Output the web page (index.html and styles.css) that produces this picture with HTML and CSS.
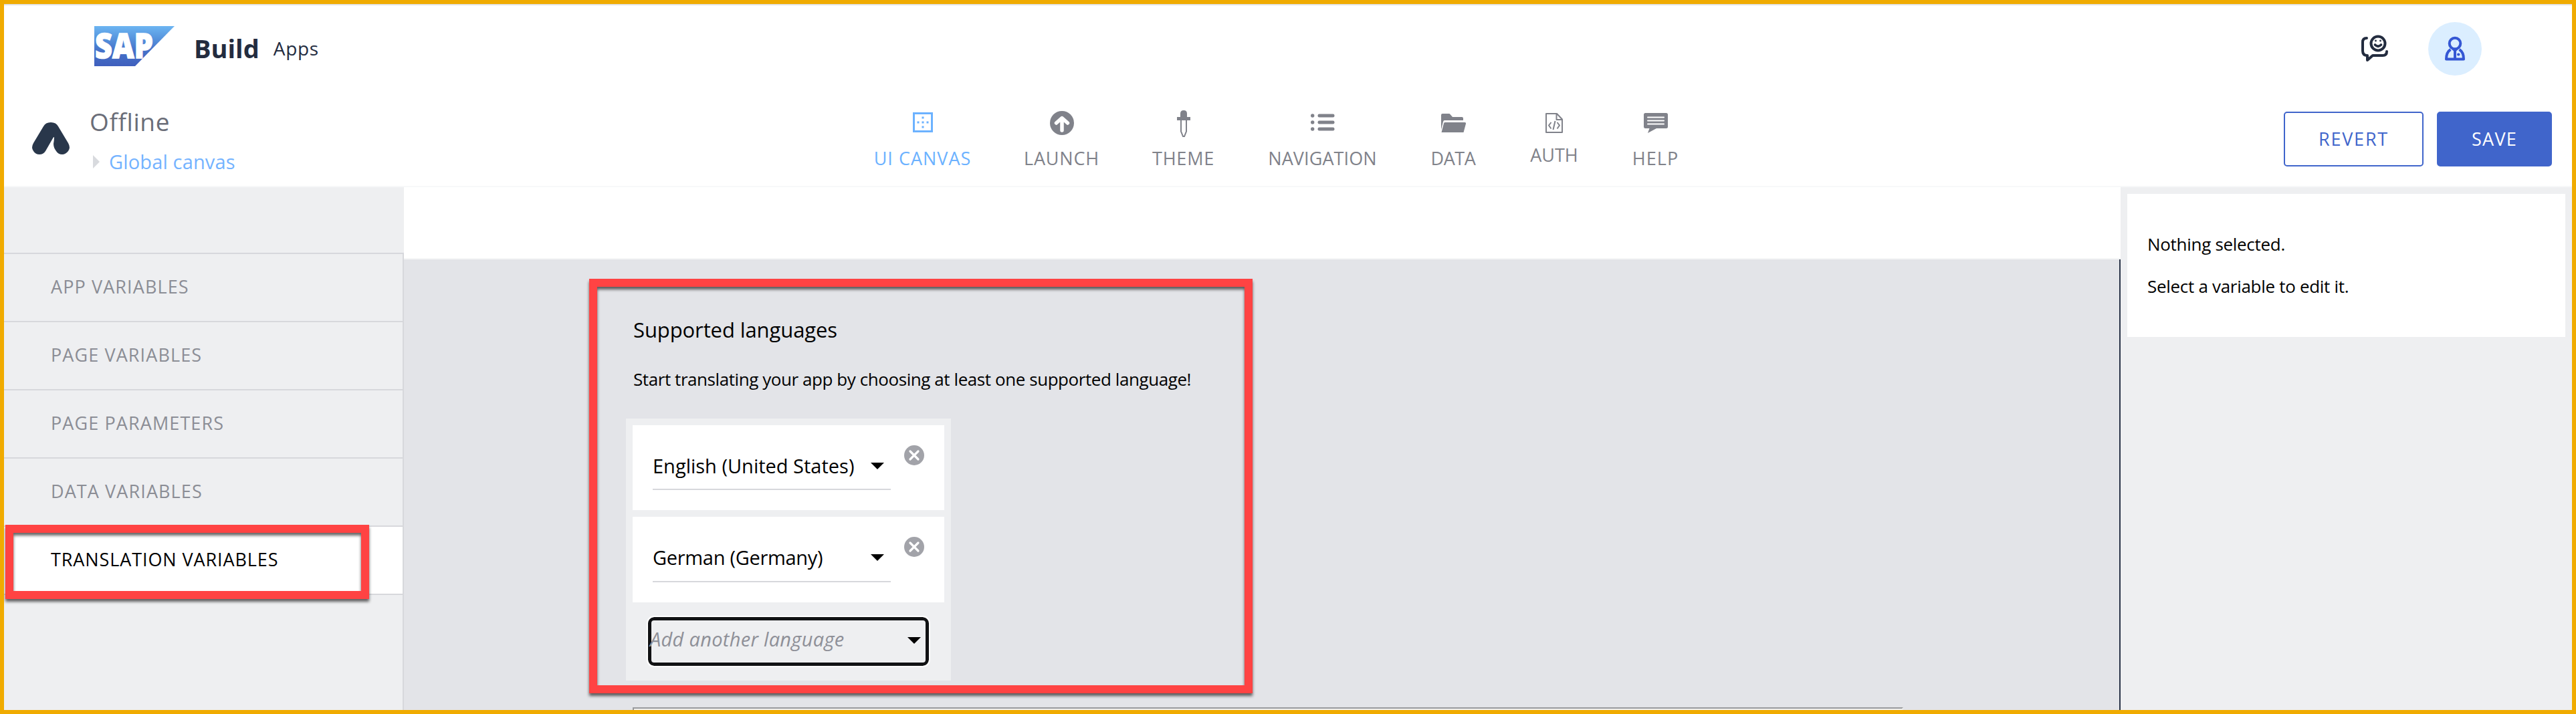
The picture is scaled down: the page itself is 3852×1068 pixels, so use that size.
FILE: index.html
```html
<!DOCTYPE html>
<html lang="en">
<head>
<meta charset="utf-8">
<title>SAP Build Apps</title>
<link rel="stylesheet" href="styles.css">
</head>
<body>
<div class="app">
  <header class="header">
    <div class="shell-bar">
      <svg class="sap-logo" width="120" height="60" viewBox="0 0 120 60">
        <defs><linearGradient id="sap" x1="0" y1="0" x2="0" y2="1"><stop offset="0" stop-color="#6cb5f2"/><stop offset=".3" stop-color="#5795de"/><stop offset=".6" stop-color="#4673ca"/><stop offset="1" stop-color="#3f5fbd"/></linearGradient></defs>
        <path d="M0 0H120L61 60H0Z" fill="url(#sap)"/>
        <text class="sap-text" x="1" y="48" textLength="87" lengthAdjust="spacingAndGlyphs">SAP</text>
      </svg>
      <span class="product">Build</span>
      <span class="product-sub">Apps</span>
      <div class="shell-actions">
        <svg class="feedback" width="42" height="42" viewBox="0 0 42 42" fill="none" stroke="#232c3f" stroke-width="4" stroke-linecap="round" stroke-linejoin="round">
          <path d="M9 5Q3 5 3 11V24Q3 31 10 31V38L18 31H33Q39 31 39 25"/>
          <circle cx="26" cy="13" r="10.5"/>
          <path d="M21.500 15Q26 19.500 30.500 15" stroke-width="3.6"/>
          <circle cx="22.5" cy="9" r=".6" stroke-width="1.6"/><circle cx="29.5" cy="9" r=".6" stroke-width="1.6"/>
        </svg>
        <div class="avatar">
          <svg width="32" height="38" viewBox="0 0 32 38" fill="none" stroke="#3557d4" stroke-width="4" stroke-linejoin="round">
            <circle cx="16" cy="11" r="8.3"/>
            <path d="M9.500 20Q3 24 3 34.500H29Q29 24 22.500 20M16 20V34"/>
            <path d="M10 18.500H22L16 24.500Z" fill="#3557d4" stroke="none"/>
            <path d="M21 27.500H21.500" stroke-linecap="round"/>
          </svg>
        </div>
      </div>
    </div>
    <div class="tool-bar">
      <svg class="app-logo" width="56" height="48" viewBox="0 0 56 48">
        <path d="M17 6Q20 0 28 0T39 6L54 31Q58 38 54 43Q50 48 45 48Q39 48 36 43Q32 38 32 32Q33 26 33 23Q33 21 31.500 23L20 43Q17 48 11 48Q5 48 2 43Q-2 38 2 31Z" fill="#29374b"/>
      </svg>
      <div class="titles">
        <div class="title">Offline</div>
        <div class="crumb"><i class="crumb-arrow"></i>Global canvas</div>
      </div>
      <nav class="nav">
        <a class="nav-item active">
          <svg width="30" height="30" viewBox="0 0 30 30"><path d="M1.500 1.500H28.500V28.500H1.500Z" fill="none" stroke="currentColor" stroke-width="3"/><path d="M6.500 13.500h3v3h-3zM13.500 13.500h3v3h-3zM20.500 13.500h3v3h-3zM13.500 6.500h3v3h-3zM13.500 20.500h3v3h-3z" fill="currentColor"/></svg>
          <span class="ls-canvas">UI CANVAS</span></a>
        <a class="nav-item">
          <svg width="36" height="36" viewBox="0 0 36 36"><circle cx="18" cy="18" r="18" fill="currentColor"/><path d="M18 29V12M9.500 18L18 10.500L26.500 18" fill="none" stroke="#fff" stroke-width="5.500" stroke-linecap="round" stroke-linejoin="round"/></svg>
          <span class="ls-launch">LAUNCH</span></a>
        <a class="nav-item">
          <svg width="20" height="40" viewBox="0 0 20 40"><path d="M5 10V5Q5 0 10 0T15 5V10H20V15H0V10Z" fill="currentColor"/><path d="M6 15V31.500L9 39H11L14 31.500V15" fill="none" stroke="currentColor" stroke-width="2"/></svg>
          <span class="ls-launch">THEME</span></a>
        <a class="nav-item">
          <svg width="36" height="26" viewBox="0 0 36 26" fill="currentColor"><circle cx="2.700" cy="3" r="2.700"/><circle cx="2.700" cy="13" r="2.700"/><circle cx="2.700" cy="23" r="2.700"/><rect x="10.500" y=".5" width="25" height="5" rx="2.200"/><rect x="10.500" y="10.500" width="25" height="5" rx="2.200"/><rect x="10.500" y="20.500" width="25" height="5" rx="2.200"/></svg>
          <span class="ls-navigation">NAVIGATION</span></a>
        <a class="nav-item">
          <svg class="low" width="37" height="28" viewBox="0 0 37 28" fill="currentColor"><path d="M0 2Q0 0 2 0H12Q13 0 13.500 1L17 5H31Q33 5 33 7V10H5Q3.500 10 3 12L0 24Z"/><path d="M5.500 13H35Q37.500 13 37 15L33.500 28H.5L4 14.500Q4.300 13 5.500 13Z"/></svg>
          <span class="ls-data">DATA</span></a>
        <a class="nav-item auth">
          <svg width="26" height="30" viewBox="0 0 26 30" fill="none" stroke="currentColor" stroke-width="2" stroke-linejoin="round"><path d="M1 1H17L25 9.500V29H1ZM16.500 1V10H25"/><path d="M8.500 14L5 18.500L8.500 23.500M17.500 14L21 18.500L17.500 23.500M14.500 12L11.500 25"/></svg>
          <span>AUTH</span></a>
        <a class="nav-item">
          <svg class="low" width="36" height="30" viewBox="0 0 36 30"><path d="M2.500 0H33.500Q36 0 36 2.500V20.500Q36 23 33.500 23H19L6 30L8.500 23H2.500Q0 23 0 20.500V2.500Q0 0 2.500 0Z" fill="currentColor"/><path d="M6 6.500H30M6 11.500H30M6 16.500H30" stroke="#fff" stroke-width="2" stroke-linecap="round"/></svg>
          <span class="ls-help">HELP</span></a>
      </nav>
      <div class="buttons">
        <button class="btn btn-outline">REVERT</button>
        <button class="btn btn-fill">SAVE</button>
      </div>
    </div>
  </header>
  <div class="body">
    <aside class="sidebar">
      <ul class="menu">
        <li>APP VARIABLES</li>
        <li>PAGE VARIABLES</li>
        <li>PAGE PARAMETERS</li>
        <li>DATA VARIABLES</li>
        <li class="selected">TRANSLATION VARIABLES</li>
      </ul>
    </aside>
    <main class="main">
      <div class="main-top"></div>
      <div class="canvas">
        <h2 class="heading">Supported languages</h2>
        <p class="intro">Start translating your app by choosing at least one supported language!</p>
        <div class="languages">
          <div class="card">
            <div class="select">English (United States)<i class="caret"></i></div>
            <svg class="remove" width="30" height="30" viewBox="0 0 30 30"><circle cx="15" cy="15" r="15" fill="#a2a3a9"/><path d="M9 9L21 21M21 9L9 21" stroke="#fff" stroke-width="3.200" stroke-linecap="round"/></svg>
          </div>
          <div class="card">
            <div class="select select-tight">German (Germany)<i class="caret"></i></div>
            <svg class="remove" width="30" height="30" viewBox="0 0 30 30"><circle cx="15" cy="15" r="15" fill="#a2a3a9"/><path d="M9 9L21 21M21 9L9 21" stroke="#fff" stroke-width="3.200" stroke-linecap="round"/></svg>
          </div>
          <div class="add"><span class="add-label">Add another language</span><i class="caret"></i></div>
        </div>
        <div class="table"></div>
      </div>
    </main>
    <aside class="panel">
      <div class="panel-card">
        <p>Nothing selected.</p>
        <p class="second">Select a variable to edit it.</p>
      </div>
    </aside>
  </div>
  <div class="marker marker-menu"></div>
  <div class="marker marker-languages"></div>
</div>
</body>
</html>
```
FILE: styles.css
```css
* { box-sizing: border-box; }
body, p, h2, ul { margin: 0; padding: 0; }
body { font-family: "Open Sans", "Noto Sans", sans-serif; color: #000; white-space: nowrap; }

.app { position: relative; width: 3852px; height: 1068px; border: 6px solid #f0ab00; display: flex; flex-direction: column; overflow: hidden; }

.header { height: 274px; flex: none; background: #fff; border-top: 2px solid #e2e2e2; border-bottom: 2px solid #f7f8f9; }
.shell-bar { height: 130px; display: flex; align-items: flex-start; padding: 31px 135px 0; }
.sap-logo { flex: none; overflow: visible; }
.sap-text { font-size: 51px; font-weight: 800; fill: #fff; stroke: #fff; stroke-width: 1.5px; }
.product { margin: 13px 0 0 29px; font-size: 38px; line-height: 40px; font-weight: 700; color: #232c3f; }
.product-sub { margin: 13px 0 0 21px; font-size: 28px; line-height: 40px; letter-spacing: .7px; color: #232c3f; }
.shell-actions { margin-left: auto; display: flex; align-items: flex-start; gap: 59px; }
.feedback { margin-top: 13px; }
.avatar { width: 80px; height: 80px; margin-top: -6px; border-radius: 50%; background: #dbeeff; display: flex; align-items: center; justify-content: center; }

.tool-bar { height: 140px; display: flex; align-items: flex-start; padding-left: 42px; padding-right: 30px; }
.app-logo { margin-top: 45px; flex: none; }
.titles { width: 1173px; margin: 22px 0 0 30px; }
.title { font-size: 37px; line-height: 44px; letter-spacing: .6px; color: #6a6d78; }
.crumb { display: flex; align-items: center; margin: 18px 0 0 5px; font-size: 29px; line-height: 40px; letter-spacing: .15px; color: #74b3ff; }
.crumb-arrow { border: 10px solid transparent; border-left-color: #d8dade; border-right: 0; margin-right: 14px; }

.nav { display: grid; grid-template-columns: 145px 111px 93px 163px 68px 74px 69px; column-gap: 80px; margin-top: 26px; }
.nav-item { height: 88px; display: flex; flex-direction: column; align-items: center; font-size: 27px; line-height: 30px; color: #80828a; }
.nav-item.active { color: #6cb2ff; }
.nav-item svg { margin: auto 0; transform: translateY(-5px); }
.nav-item svg.low { transform: translateY(-4px); }
.nav-item span { margin-top: auto; }
.nav-item.auth { padding-bottom: 5px; }
.nav-item.auth svg { transform: translateY(-3px); }
.ls-canvas { letter-spacing: 1px; }
.ls-launch { letter-spacing: .8px; }
.ls-navigation { letter-spacing: .1px; }
.ls-data { letter-spacing: -.4px; }
.ls-help { letter-spacing: 1.1px; }

.buttons { display: flex; gap: 20px; margin: 29px 0 0 auto; }
.btn { height: 82px; padding: 0 0 2px; font: 27px "Open Sans", sans-serif; border: 2px solid #4065cb; border-radius: 5px; }
.btn-outline { width: 209px; letter-spacing: 1.8px; background: #fff; color: #4065cb; }
.btn-fill { width: 172px; letter-spacing: 1.2px; background: #4065cb; color: #fff; }

.body { flex: 1; display: flex; min-height: 0; }
.sidebar { width: 598px; flex: none; background: #eeeff1; padding-top: 98px; }
.menu { list-style: none; height: 100%; border-top: 2px solid #d7d8dc; border-right: 2px solid #d7d8dc; }
.menu li { height: 102px; border-bottom: 2px solid #d7d8dc; padding-left: 70px; font-size: 27px; line-height: 98px; letter-spacing: 1.1px; color: #8b8d95; }
.menu .selected { background: #fff; color: #000; letter-spacing: .9px; }

.main { width: 2567px; flex: none; display: flex; flex-direction: column; background: #e3e4e8; }
.main-top { height: 108px; flex: none; background: #fff; border-bottom: 2px solid #f5f6f7; }
.canvas { flex: 1; min-height: 0; padding: 85px 0 0 332px; border-right: 2px solid #2a3447; }
.heading { padding-left: 11px; font-size: 31px; line-height: 40px; font-weight: 400; letter-spacing: -.1px; }
.intro { padding: 34px 0 0 11px; font-size: 26px; line-height: 40px; letter-spacing: -.43px; }
.languages { width: 486px; height: 392px; margin-top: 39px; padding: 10px; background: #eeeff1; display: flex; flex-direction: column; }
.card { height: 127px; margin-bottom: 10px; background: #fff; display: flex; padding: 30px; }
.card + .card { height: 128px; margin-bottom: 0; }
.select { width: 356px; height: 67px; display: flex; align-items: center; justify-content: space-between; padding: 11px 10px 14px 0; border-bottom: 2px solid #d7d8dc; font-size: 29px; line-height: 40px; }
.card + .card .select { height: 68px; padding-bottom: 15px; }
.select-tight { letter-spacing: -.3px; }
.caret { border: 10px solid transparent; border-top-color: #000; border-bottom: 0; flex: none; }
.remove { margin-left: 20px; flex: none; }
.add { width: 420px; height: 73px; margin: 22px 0 0 23px; border: 5px solid #111214; border-radius: 9px; outline: 2px solid #fff; display: flex; align-items: center; justify-content: space-between; padding: 0 7px 4px 0; color: #8e9098; font-size: 29px; line-height: 40px; font-style: italic; }
.add-label { margin: -3px 0 0 -2px; letter-spacing: .3px; }
.table { width: 1900px; height: 60px; margin: 40px 0 0 10px; background: #f2f2f3; border: 2px solid #999a9c; border-right-color: #eee; }

.panel { flex: 1; background: #eeeff1; padding: 10px; }
.panel-card { height: 214px; background: #fff; padding: 55px 30px; font-size: 26px; line-height: 40px; letter-spacing: -.3px; }
.second { padding-top: 23px; }

.marker { position: absolute; border: 12px solid #ff4343; filter: drop-shadow(0 4px 2px rgba(0, 0, 0, .6)); }
.marker-menu { left: 2px; top: 779px; width: 544px; height: 111px; }
.marker-languages { left: 875px; top: 411px; width: 992px; height: 620px; }
```
